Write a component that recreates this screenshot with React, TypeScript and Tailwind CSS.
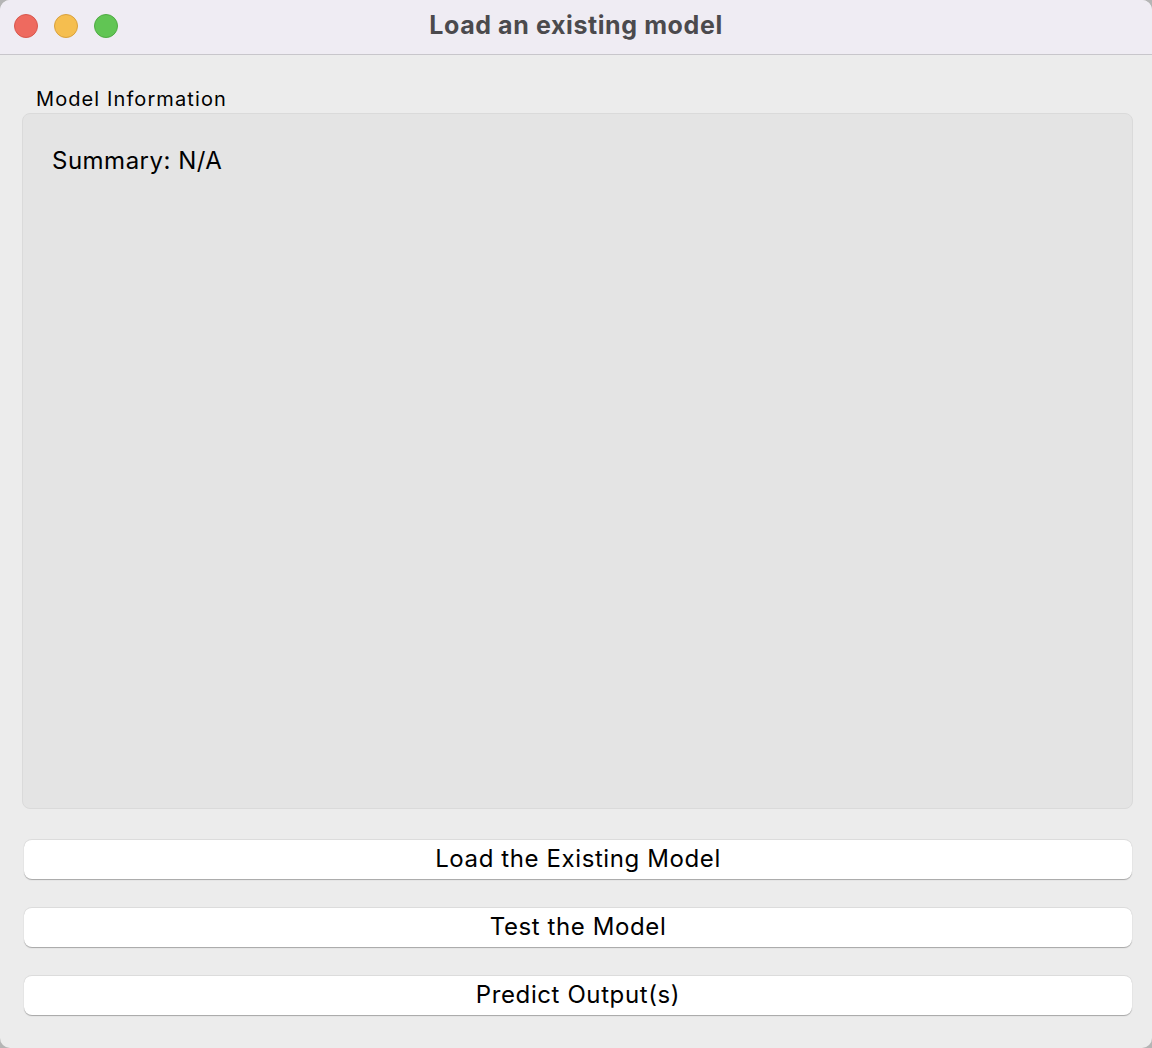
export default function App() {
  const buttons = ['Load the Existing Model', 'Test the Model', 'Predict Output(s)'];

  return (
    <div className="w-[1152px] h-[1048px] bg-[#b5b5b5]" style={{ fontFamily: '"Helvetica Neue", Inter, "Liberation Sans", Arial, sans-serif' }}>
      <div className="w-full h-full rounded-[10px] overflow-hidden bg-[#ececec] flex flex-col">
        {/* title bar */}
        <div className="relative h-[55px] bg-[#efecf3] border-b border-[#c8c6cb] flex items-center justify-center shrink-0">
          <div className="absolute left-[14px] top-[14px] flex gap-[16px]">
            <span className="w-[24px] h-[24px] rounded-full bg-[#ee6a5f] border border-[#d8574d]" />
            <span className="w-[24px] h-[24px] rounded-full bg-[#f5be4f] border border-[#d9a13c]" />
            <span className="w-[24px] h-[24px] rounded-full bg-[#61c554] border border-[#4fab43]" />
          </div>
          <span className="text-[25px] font-bold text-[#4b4a4d] tracking-[0.6px] -mt-[3px]">Load an existing model</span>
        </div>

        {/* body */}
        <div className="flex-1 flex flex-col pl-[22px] pr-[19px] pt-[31px]">
          <div className="pl-[14px] text-[20px] leading-[26px] tracking-[1.1px] text-black mb-[1px]">Model Information</div>
          <div className="h-[696px] bg-[#e4e4e4] border border-[#dadada] rounded-[8px] px-[29px] pt-[32px]">
            <div className="text-[24px] leading-[30px] tracking-[0.5px] text-black">Summary: N/A</div>
          </div>

          <div className="flex flex-col gap-[28px] mt-[30px] pl-[2px] pr-[1px]">
            {buttons.map((b) => (
              <button
                key={b}
                className="h-[40px] w-full bg-white rounded-[8px] border-t border-[#dcdcdc] shadow-[0_1px_1px_rgba(0,0,0,0.3)] text-[24px] leading-[30px] tracking-[0.6px] text-black flex items-center justify-center pb-[1px]"
              >
                {b}
              </button>
            ))}
          </div>
        </div>
      </div>
    </div>
  );
}
